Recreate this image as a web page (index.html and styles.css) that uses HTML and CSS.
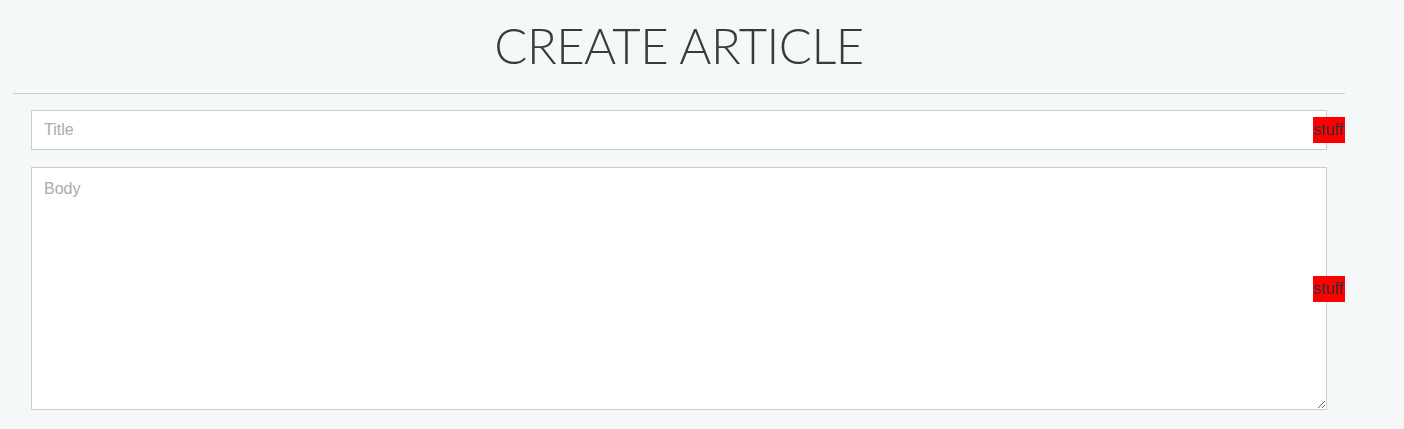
FILE: index.html
```html
<!DOCTYPE html>
<html lang="en">
<head>
    <meta charset="UTF-8">
    <title>Create Article</title>
    <link rel="stylesheet" href="styles.css">
</head>
<body>
    <main class="container">
        <h1 class="page-title">CREATE ARTICLE</h1>

        <form class="article-form">
            <div class="form-group">
                <input class="field" type="text" placeholder="Title">
                <span class="stuff">stuff</span>
            </div>
            <div class="form-group">
                <textarea class="field field-body" placeholder="Body"></textarea>
                <span class="stuff">stuff</span>
            </div>
        </form>
    </main>
</body>
</html>
```

FILE: styles.css
```css
:root {
    --bg-color: #f5f8f9;
    --text-color: #333333;
    --border-color: #cccccc;
    --placeholder-color: #a9a9b2;
    --stuff-color: #ff0000;
}

* {
    margin: 0;
    padding: 0;
    box-sizing: border-box;
}

body {
    background: var(--bg-color);
    color: var(--text-color);
    font-family: 'Liberation Sans', Arial, sans-serif;
}

.container {
    width: 1332px;
    margin-left: 13px;
}

/* Заголовок */
.page-title {
    font-family: Lato, sans-serif;
    font-weight: 300;
    font-size: 49px;
    line-height: 59px;
    letter-spacing: -0.5px;
    text-align: center;
    color: #3a3a3a;
    padding-top: 16px;
    padding-bottom: 18px;
    border-bottom: 1px solid var(--border-color);
}

/* Форма */
.article-form {
    padding: 16px 18px 0;
}

.form-group {
    position: relative;
    margin-bottom: 17px;
}

.field {
    display: block;
    width: 100%;
    height: 40px;
    padding: 0 12px;
    border: 1px solid var(--border-color);
    background: #ffffff;
    font-family: 'Liberation Sans', Arial, sans-serif;
    font-size: 16px;
    color: var(--text-color);
    outline: none;
}

.field::placeholder {
    color: var(--placeholder-color);
}

.field-body {
    height: 243px;
    padding: 12px;
    resize: vertical;
}

.stuff {
    position: absolute;
    top: 50%;
    right: -18px;
    transform: translateY(-50%);
    background: var(--stuff-color);
    color: #333333;
    font-size: 16px;
    line-height: 26px;
    width: 32px;
    overflow: hidden;
    white-space: nowrap;
}
```
